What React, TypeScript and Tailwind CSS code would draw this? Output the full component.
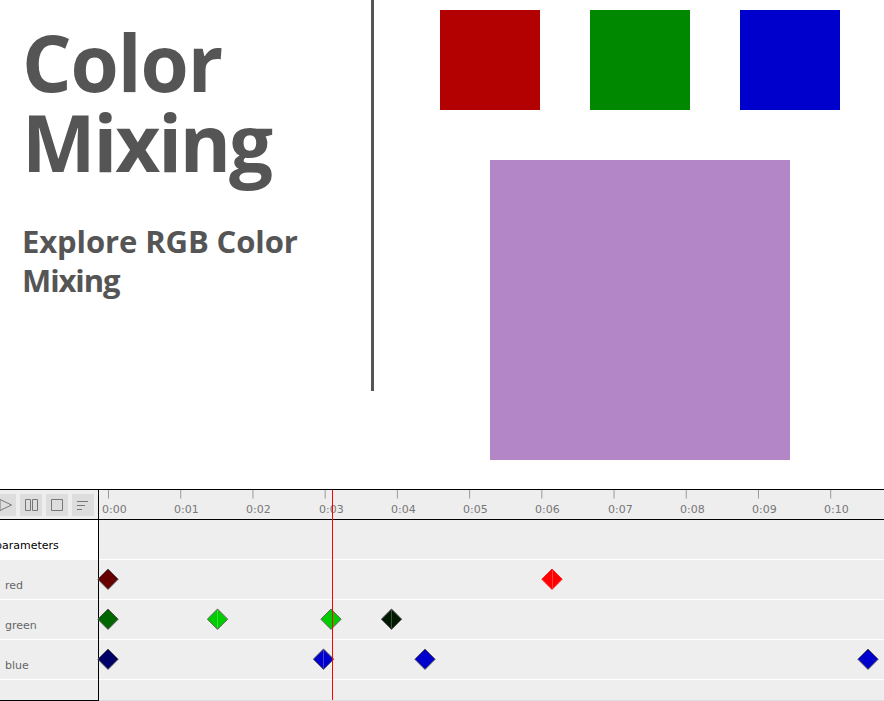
type Key = { x: number; color: string; edge?: string; seam?: string };

const ticks = ["0:00", "0:01", "0:02", "0:03", "0:04", "0:05", "0:06", "0:07", "0:08", "0:09", "0:10"];
const labelX = [102, 174, 246, 319, 391, 463, 535, 608, 680, 752, 824];

const tracks: { name: string; keys: Key[] }[] = [
  {
    name: "red",
    keys: [
      { x: 108, color: "#660000" },
      { x: 552, color: "#ff0000", edge: "#ff2020", seam: "#ff4040" },
    ],
  },
  {
    name: "green",
    keys: [
      { x: 108, color: "#006600" },
      { x: 217.5, color: "#00cc00", edge: "#666666", seam: "#40d840" },
      { x: 331, color: "#00cc00", edge: "#666666" },
      { x: 391.5, color: "#001a00", seam: "#405040" },
    ],
  },
  {
    name: "blue",
    keys: [
      { x: 108, color: "#000066" },
      { x: 323.5, color: "#0000cc", seam: "#4040d8" },
      { x: 425, color: "#0000cc" },
      { x: 868, color: "#0000cc" },
    ],
  },
];

function Keyframe({ k }: { k: Key }) {
  return (
    <svg className="absolute top-[7px] h-6 w-6" style={{ left: Math.floor(k.x) - 99 - 12 }} viewBox="0 0 24 24">
      <path
        d="M12 2L22.2 12.2L12 22.4L1.8 12.2Z"
        transform={k.x % 1 ? "translate(0.5 0)" : undefined}
        fill={k.color}
        stroke={k.edge ?? "#555555"}
        strokeWidth="1"
      />
      {k.seam && <path d="M12.5 3V21" stroke={k.seam} strokeWidth="1" />}
    </svg>
  );
}

function ToolButton({ d }: { d: string }) {
  return (
    <button className="h-[22px] w-[22px] shrink-0 bg-[#dddddd]">
      <svg viewBox="0 0 22 22" className="h-[22px] w-[22px]" fill="none" stroke="#777777" strokeWidth="1">
        <path d={d} />
      </svg>
    </button>
  );
}

export default function App() {
  return (
    <div className="flex h-[701px] w-[884px] flex-col overflow-hidden bg-white">
      <div className="flex h-[489px] shrink-0 items-start">
        <section className="h-[391px] w-[374px] shrink-0 border-r-[3px] border-[#555555] pl-[22px] font-['Open_Sans',sans-serif] font-bold text-[#555555]">
          <h1 className="pt-[22px] text-[78px] leading-[80px]">
            <span className="block tracking-[-1.1px]">Color</span>
            <span className="block tracking-[-2.1px]">Mixing</span>
          </h1>
          <h2 className="pt-[40px] text-[31px] leading-[39px] whitespace-nowrap">
            <span className="block tracking-[-0.1px]">Explore RGB Color</span>
            <span className="block tracking-[-1.1px]">Mixing</span>
          </h2>
        </section>
        <section className="ml-[66px] flex w-[400px] flex-col items-center gap-[50px] pt-[10px]">
          <div className="flex gap-[50px]">
            <div className="h-[100px] w-[100px] bg-[#b30000]" />
            <div className="h-[100px] w-[100px] bg-[#008800]" />
            <div className="h-[100px] w-[100px] bg-[#0000cc]" />
          </div>
          <div className="h-[300px] w-[300px] bg-[#b386c7]" />
        </section>
      </div>

      <div className="relative flex h-[212px] border-t border-black bg-[#eeeeee] font-['DejaVu_Sans',sans-serif] text-[11px] text-[#666666]">
        <aside className="flex w-[99px] shrink-0 flex-col border-r border-b border-black">
          <div className="flex h-[30px] shrink-0 border-b border-black pt-1">
            <div className="-ml-[6px] flex gap-1">
              <ToolButton d="M6 5.5L17.5 11L6 16.5Z" />
              <ToolButton d="M5.5 5.5H10.5V16.5H5.5ZM12.5 5.5H17.5V16.5H12.5Z" />
              <ToolButton d="M5.5 5.5H16.5V16.5H5.5Z" />
              <ToolButton d="M5 7.5H16M5 11.5H13M5 15.5H10" />
            </div>
          </div>
          <div className="-ml-[5px] h-10 shrink-0 bg-white pt-[18px] leading-[16px] text-black">parameters</div>
          {tracks.map((t) => (
            <div key={t.name} className="h-10 shrink-0 border-b border-white pt-[18px] pl-[5px] leading-[16px]">
              {t.name}
            </div>
          ))}
        </aside>

        <div className="flex flex-1 flex-col border-b border-[#dddddd]">
          <div className="relative h-[30px] shrink-0 border-b border-black text-[#777777]">
            <svg className="block h-[9px] w-[785px]" stroke="#999999" strokeWidth="1">
              {ticks.map((t, i) => (
                <line key={t} x1={9.5 + i * 72.22} x2={9.5 + i * 72.22} y1="0" y2="8.5" />
              ))}
            </svg>
            {ticks.map((t, i) => (
              <span key={t} className="absolute top-[12px] leading-[16px]" style={{ left: labelX[i] - 99 }}>
                {t}
              </span>
            ))}
          </div>
          <div className="h-10 shrink-0 border-b border-white" />
          {tracks.map((t) => (
            <div key={t.name} className="relative h-10 shrink-0 border-b border-white">
              {t.keys.map((k) => (
                <Keyframe key={k.x} k={k} />
              ))}
            </div>
          ))}
        </div>
        <div className="absolute top-0 left-[332px] h-[210px] w-px bg-[#ff0000]" />
      </div>
    </div>
  );
}
